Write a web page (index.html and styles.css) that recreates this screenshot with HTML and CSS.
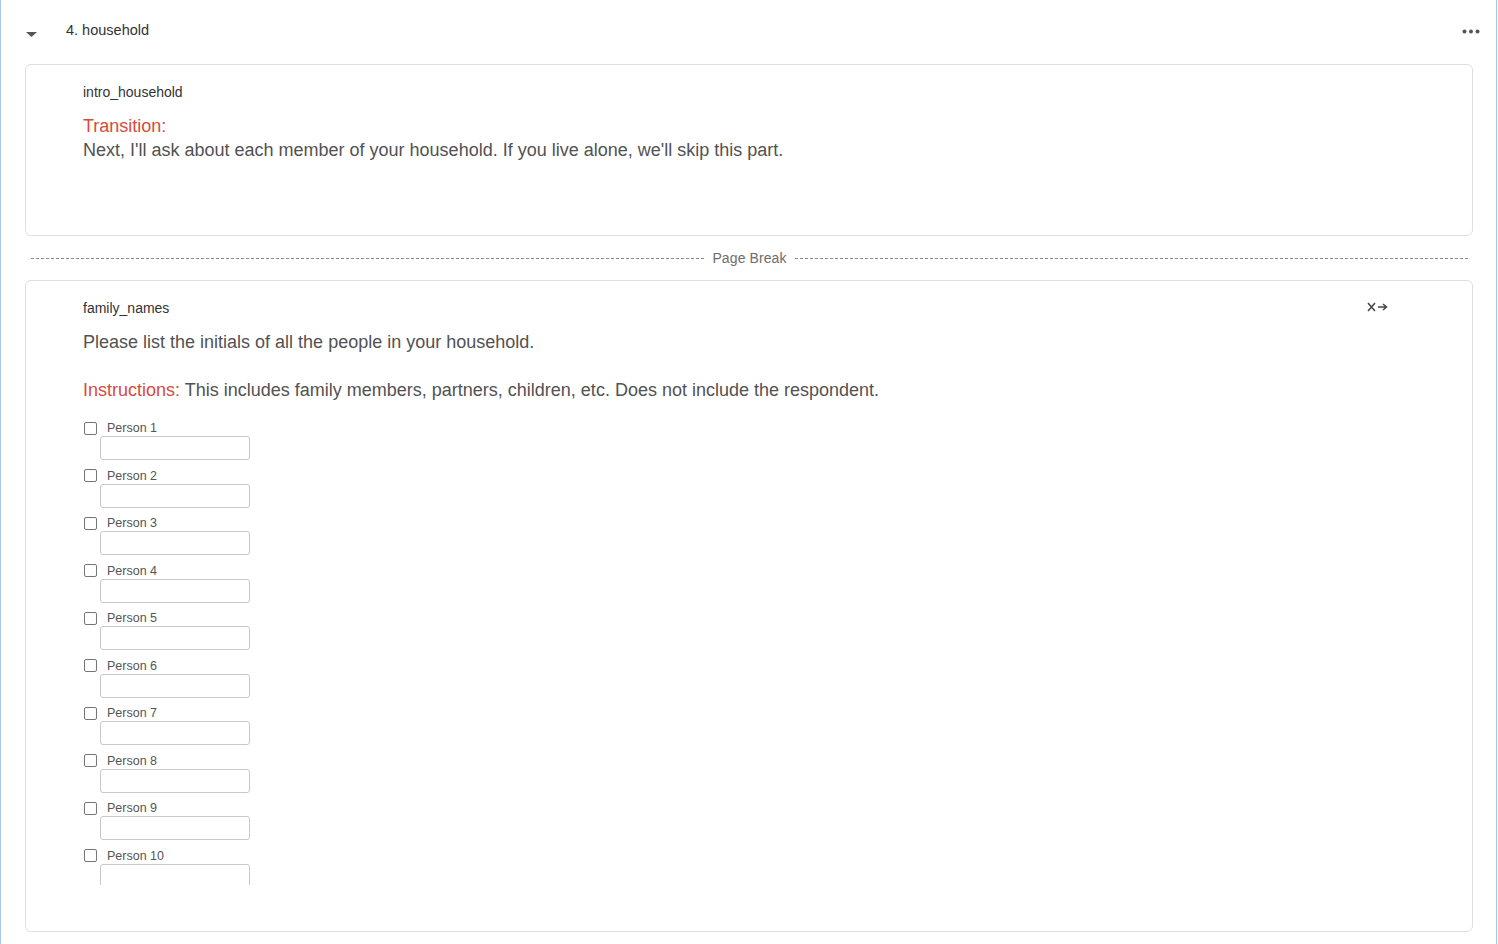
FILE: index.html
```html
<!DOCTYPE html>
<html>
<head>
<meta charset="utf-8">
<link rel="stylesheet" href="styles.css">
</head>
<body>
<div class="block">
  <div class="block-header">
    <svg class="caret" width="11" height="5" viewBox="0 0 11 5"><path d="M0 0 H11 L5.5 5 Z" fill="#555"/></svg>
    <span class="block-title">4. household</span>
    <svg class="more" width="18" height="5" viewBox="0 0 18 5"><circle cx="2.5" cy="2.5" r="2" fill="#555"/><circle cx="9" cy="2.5" r="2" fill="#555"/><circle cx="15.5" cy="2.5" r="2" fill="#555"/></svg>
  </div>

  <div class="card card-intro">
    <div class="qid">intro_household</div>
    <div class="qtext"><span class="red">Transition:</span><br>Next, I'll ask about each member of your household. If you live alone, we'll skip this part.</div>
  </div>

  <div class="page-break">
    <span class="dash"></span>
    <span class="pb-label">Page Break</span>
    <span class="dash"></span>
  </div>

  <div class="card card-family">
    <div class="qid-row">
      <div class="qid">family_names</div>
      <svg class="xarrow" width="22" height="10" viewBox="0 0 22 10"><path d="M1 1 L8 9 M8 1 L1 9" stroke="#444" stroke-width="1.5" fill="none"/><path d="M11 5 H19 M16 2 L19.5 5 L16 8" stroke="#444" stroke-width="1.5" fill="none"/></svg>
    </div>
    <div class="qtext">Please list the initials of all the people in your household.</div>
    <div class="qtext instr"><span class="red">Instructions:</span> This includes family members, partners, children, etc. Does not include the respondent.</div>
    <div class="choices">
      <div class="choice"><label class="choice-label"><input type="checkbox" class="cb"><span>Person 1</span></label><input type="text" class="tf"></div>
      <div class="choice"><label class="choice-label"><input type="checkbox" class="cb"><span>Person 2</span></label><input type="text" class="tf"></div>
      <div class="choice"><label class="choice-label"><input type="checkbox" class="cb"><span>Person 3</span></label><input type="text" class="tf"></div>
      <div class="choice"><label class="choice-label"><input type="checkbox" class="cb"><span>Person 4</span></label><input type="text" class="tf"></div>
      <div class="choice"><label class="choice-label"><input type="checkbox" class="cb"><span>Person 5</span></label><input type="text" class="tf"></div>
      <div class="choice"><label class="choice-label"><input type="checkbox" class="cb"><span>Person 6</span></label><input type="text" class="tf"></div>
      <div class="choice"><label class="choice-label"><input type="checkbox" class="cb"><span>Person 7</span></label><input type="text" class="tf"></div>
      <div class="choice"><label class="choice-label"><input type="checkbox" class="cb"><span>Person 8</span></label><input type="text" class="tf"></div>
      <div class="choice"><label class="choice-label"><input type="checkbox" class="cb"><span>Person 9</span></label><input type="text" class="tf"></div>
      <div class="choice"><label class="choice-label"><input type="checkbox" class="cb"><span>Person 10</span></label><input type="text" class="tf"></div>
    </div>
  </div>
</div>
</body>
</html>
```

FILE: styles.css
```css
html, body {
  margin: 0;
  padding: 0;
  background: #fff;
}
body {
  font-family: "Liberation Sans", Arial, sans-serif;
  color: #333;
}
.block {
  box-sizing: border-box;
  width: 1497px;
  min-height: 944px;
  border-left: 1px solid #a8c8ee;
  border-right: 1px solid #a8c8ee;
  padding: 0 23px 0 24px;
}
.block-header {
  height: 64px;
  display: flex;
  align-items: center;
  padding-left: 1px;
  padding-right: 0;
}
.caret {
  margin-top: 5px;
  flex: none;
}
.block-title {
  margin-left: 29px;
  font-size: 14.5px;
  color: #333;
  margin-top: -4px;
}
.more {
  margin-left: auto;
  margin-right: -7px;
  margin-top: -2px;
}
.card {
  box-sizing: border-box;
  border: 1px solid #dedede;
  border-radius: 6px;
  padding: 19px 57px 0 57px;
  background: #fff;
}
.card-intro {
  height: 172px;
}
.card-family {
  height: 652px;
}
.qid {
  font-size: 14px;
  line-height: 16px;
  color: #333;
}
.qid-row {
  display: flex;
  align-items: center;
}
.xarrow {
  margin-left: auto;
  margin-right: 26px;
  margin-top: -2px;
}
.qtext {
  margin-top: 14px;
  font-size: 18px;
  line-height: 24px;
  color: #525252;
}
.instr {
  margin-top: 24px;
}
.red {
  color: #d84b3b;
}
.page-break {
  height: 44px;
  display: flex;
  align-items: center;
  padding: 0 5px 0 6px;
}
.dash {
  flex: 1;
  border-top: 1px dashed #8a8a8a;
  margin-top: 1px;
}
.pb-label {
  font-size: 14px;
  color: #6d6d6d;
  padding: 0 8px 0 8px;
  letter-spacing: 0.1px;
}
.choices {
  margin-top: 18px;
  height: 465px;
  overflow: hidden;
}
.choice {
  display: flex;
  flex-direction: column;
  align-items: flex-start;
  margin-bottom: 7.5px;
}
.choice-label {
  display: flex;
  align-items: center;
  height: 16px;
  font-size: 12.5px;
  color: #555;
}
.cb {
  appearance: none;
  -webkit-appearance: none;
  box-sizing: border-box;
  width: 13px;
  height: 13px;
  margin: 0 10px 0 1px;
  border: 1px solid #767676;
  border-radius: 2px;
  background: #fff;
}
.tf {
  box-sizing: border-box;
  width: 150px;
  height: 24px;
  margin: 0 0 0 17px;
  border: 1px solid #c8c8c8;
  border-radius: 3px;
  background: #fff;
  padding: 0;
}
```
